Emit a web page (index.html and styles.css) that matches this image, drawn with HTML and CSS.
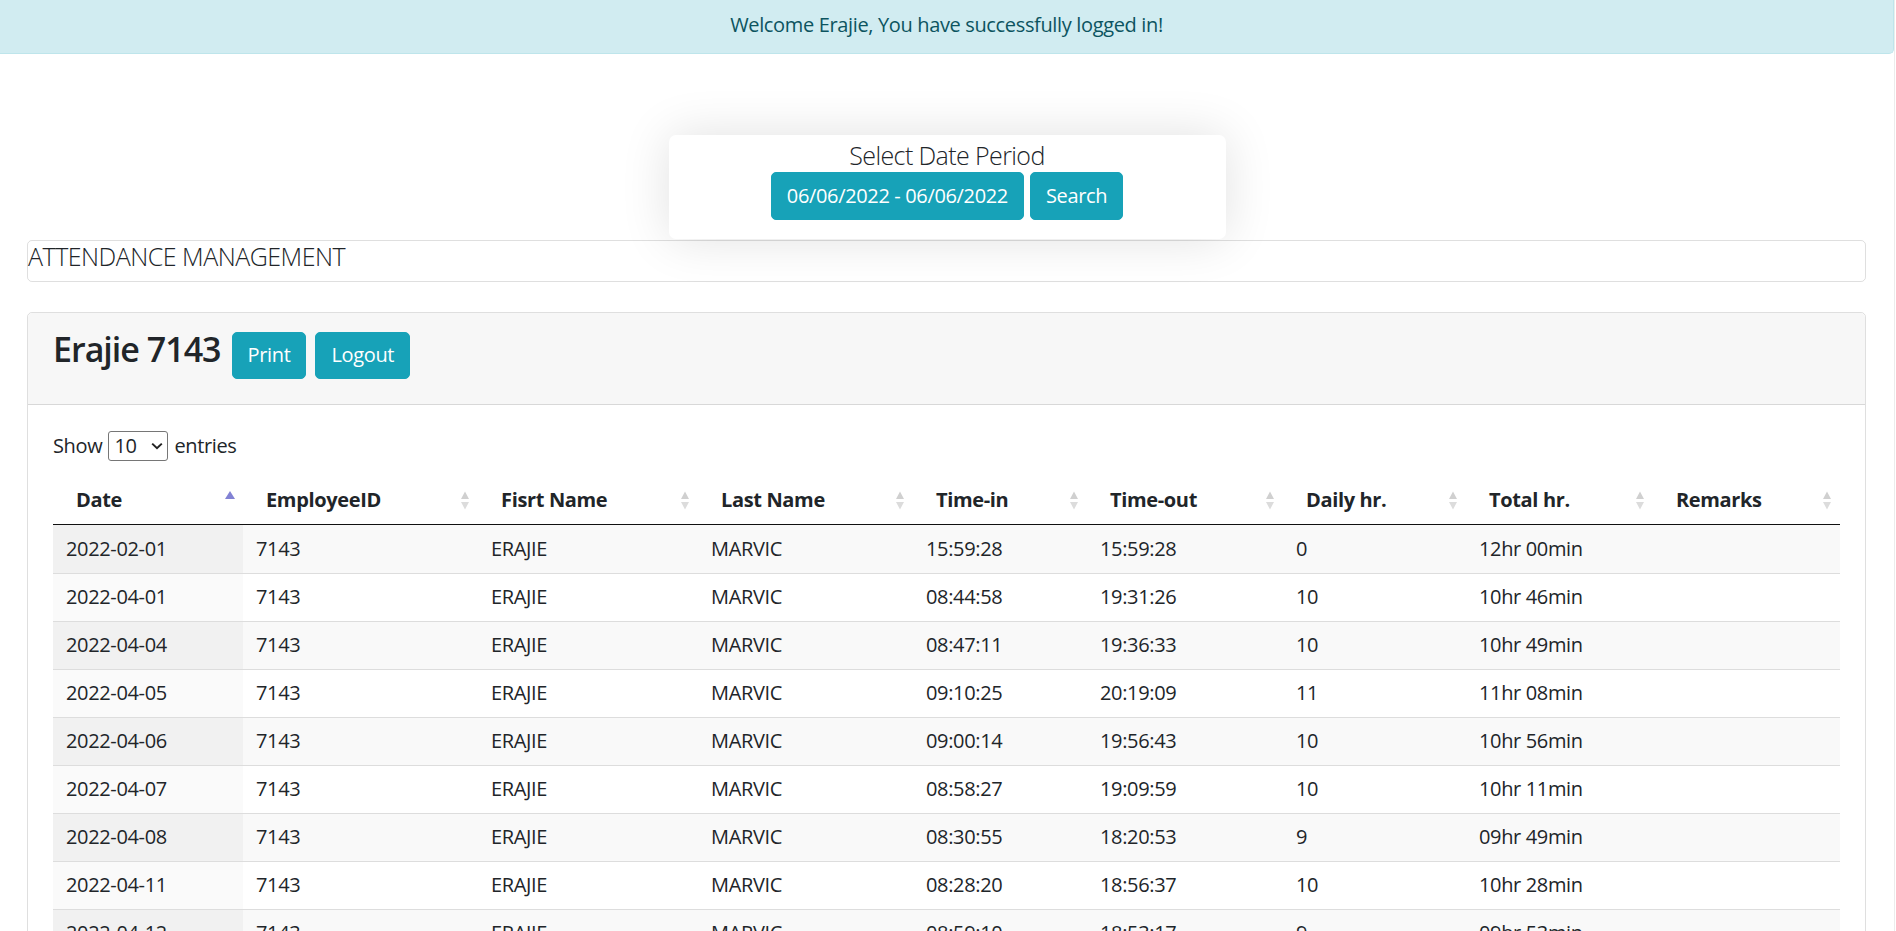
FILE: index.html
```html
<!DOCTYPE html>
<html lang="en">
<head>
<meta charset="utf-8">
<title>Attendance Management</title>
<link rel="stylesheet" href="styles.css">
</head>
<body>
<div class="page">
  <div class="alert">Welcome Erajie, You have successfully logged in!</div>

  <div class="period-wrap">
    <div class="period-card">
      <div class="period-title">Select Date Period</div>
      <div class="period-actions">
        <button class="btn btn-tall">06/06/2022 - 06/06/2022</button>
        <button class="btn btn-tall">Search</button>
      </div>
    </div>
  </div>

  <div class="content">
    <div class="title-box"><h5 class="title">ATTENDANCE MANAGEMENT</h5></div>

    <div class="card">
      <div class="card-header">
        <h3 class="user">Erajie 7143</h3>
        <button class="btn btn-print">Print</button>
        <button class="btn">Logout</button>
      </div>
      <div class="card-body">
        <div class="length">
          <span>Show</span>
          <span class="select"><span>10</span><svg width="12" height="8" viewBox="0 0 12 8"><polyline points="1.2,1.6 6,6.2 10.8,1.6" fill="none" stroke="#222" stroke-width="2"/></svg></span>
          <span>entries</span>
        </div>

        <table class="grid">
          <colgroup>
            <col style="width:190px"><col style="width:235px"><col style="width:220px"><col style="width:215px"><col style="width:174px"><col style="width:196px"><col style="width:183px"><col style="width:187px"><col style="width:187px">
          </colgroup>
          <thead>
            <tr>
              <th><div class="th-in"><span>Date</span><svg class="sort" width="10" height="19" viewBox="0 0 10 19"><path d="M0 8 L5 0 L10 8Z" fill="#8282d4"/></svg></div></th>
              <th><div class="th-in"><span>EmployeeID</span><svg class="sort" width="10" height="19" viewBox="0 0 10 19"><path d="M1 8 L5 0.5 L9 8Z" fill="#d0d0d0"/><path d="M1 11 L5 18.5 L9 11Z" fill="#dcdcdc"/></svg></div></th>
              <th><div class="th-in"><span>Fisrt Name</span><svg class="sort" width="10" height="19" viewBox="0 0 10 19"><path d="M1 8 L5 0.5 L9 8Z" fill="#d0d0d0"/><path d="M1 11 L5 18.5 L9 11Z" fill="#dcdcdc"/></svg></div></th>
              <th><div class="th-in"><span>Last Name</span><svg class="sort" width="10" height="19" viewBox="0 0 10 19"><path d="M1 8 L5 0.5 L9 8Z" fill="#d0d0d0"/><path d="M1 11 L5 18.5 L9 11Z" fill="#dcdcdc"/></svg></div></th>
              <th><div class="th-in"><span>Time-in</span><svg class="sort" width="10" height="19" viewBox="0 0 10 19"><path d="M1 8 L5 0.5 L9 8Z" fill="#d0d0d0"/><path d="M1 11 L5 18.5 L9 11Z" fill="#dcdcdc"/></svg></div></th>
              <th><div class="th-in"><span>Time-out</span><svg class="sort" width="10" height="19" viewBox="0 0 10 19"><path d="M1 8 L5 0.5 L9 8Z" fill="#d0d0d0"/><path d="M1 11 L5 18.5 L9 11Z" fill="#dcdcdc"/></svg></div></th>
              <th><div class="th-in"><span>Daily hr.</span><svg class="sort" width="10" height="19" viewBox="0 0 10 19"><path d="M1 8 L5 0.5 L9 8Z" fill="#d0d0d0"/><path d="M1 11 L5 18.5 L9 11Z" fill="#dcdcdc"/></svg></div></th>
              <th><div class="th-in"><span>Total hr.</span><svg class="sort" width="10" height="19" viewBox="0 0 10 19"><path d="M1 8 L5 0.5 L9 8Z" fill="#d0d0d0"/><path d="M1 11 L5 18.5 L9 11Z" fill="#dcdcdc"/></svg></div></th>
              <th><div class="th-in"><span>Remarks</span><svg class="sort" width="10" height="19" viewBox="0 0 10 19"><path d="M1 8 L5 0.5 L9 8Z" fill="#d0d0d0"/><path d="M1 11 L5 18.5 L9 11Z" fill="#dcdcdc"/></svg></div></th>
            </tr>
          </thead>
          <tbody>
            <tr><td class="sorted">2022-02-01</td><td>7143</td><td>ERAJIE</td><td>MARVIC</td><td>15:59:28</td><td>15:59:28</td><td>0</td><td>12hr 00min</td><td></td></tr>
            <tr><td class="sorted">2022-04-01</td><td>7143</td><td>ERAJIE</td><td>MARVIC</td><td>08:44:58</td><td>19:31:26</td><td>10</td><td>10hr 46min</td><td></td></tr>
            <tr><td class="sorted">2022-04-04</td><td>7143</td><td>ERAJIE</td><td>MARVIC</td><td>08:47:11</td><td>19:36:33</td><td>10</td><td>10hr 49min</td><td></td></tr>
            <tr><td class="sorted">2022-04-05</td><td>7143</td><td>ERAJIE</td><td>MARVIC</td><td>09:10:25</td><td>20:19:09</td><td>11</td><td>11hr 08min</td><td></td></tr>
            <tr><td class="sorted">2022-04-06</td><td>7143</td><td>ERAJIE</td><td>MARVIC</td><td>09:00:14</td><td>19:56:43</td><td>10</td><td>10hr 56min</td><td></td></tr>
            <tr><td class="sorted">2022-04-07</td><td>7143</td><td>ERAJIE</td><td>MARVIC</td><td>08:58:27</td><td>19:09:59</td><td>10</td><td>10hr 11min</td><td></td></tr>
            <tr><td class="sorted">2022-04-08</td><td>7143</td><td>ERAJIE</td><td>MARVIC</td><td>08:30:55</td><td>18:20:53</td><td>9</td><td>09hr 49min</td><td></td></tr>
            <tr><td class="sorted">2022-04-11</td><td>7143</td><td>ERAJIE</td><td>MARVIC</td><td>08:28:20</td><td>18:56:37</td><td>10</td><td>10hr 28min</td><td></td></tr>
            <tr><td class="sorted">2022-04-12</td><td>7143</td><td>ERAJIE</td><td>MARVIC</td><td>08:59:10</td><td>18:53:17</td><td>9</td><td>09hr 53min</td><td></td></tr>
            <tr><td class="sorted">2022-04-13</td><td>7143</td><td>ERAJIE</td><td>MARVIC</td><td>08:41:36</td><td>19:02:44</td><td>10</td><td>10hr 21min</td><td></td></tr>
          </tbody>
        </table>
      </div>
    </div>
  </div>
</div>
</body>
</html>
```

FILE: styles.css
```css
* { box-sizing: border-box; }

html, body {
  margin: 0;
  padding: 0;
  background: #fff;
}

body {
  font-family: "Open Sans", "Noto Sans", "Liberation Sans", sans-serif;
  font-size: 20px;
  line-height: 30px;
  letter-spacing: -0.35px;
  color: #212529;
}

.page {
  margin-right: 1px;
  border-right: 1px solid #ececec;
  min-height: 931px;
}

.alert {
  height: 54px;
  padding-top: 10px;
  text-align: center;
  background: #d1ecf1;
  color: #0c5460;
  border-bottom: 1px solid #bee5eb;
  border-right: 1px solid #bee5eb;
  border-bottom-right-radius: 5px;
}

.period-wrap {
  display: flex;
  justify-content: center;
  margin-top: 81px;
  position: relative;
  z-index: 1;
}

.period-card {
  width: 557px;
  height: 104px;
  padding-top: 5px;
  background: #fff;
  border-radius: 7px;
  box-shadow: 0 0 50px rgba(0, 0, 0, 0.12);
  text-align: center;
}

.period-title {
  font-size: 25px;
  font-weight: 300;
  line-height: 30px;
  letter-spacing: -0.6px;
}

.period-actions {
  display: flex;
  justify-content: center;
  gap: 6px;
  margin-top: 2px;
}

.btn {
  font-family: inherit;
  font-size: 20px;
  line-height: 30px;
  letter-spacing: -0.35px;
  color: #fff;
  background: #17a2b8;
  border: 1px solid #17a2b8;
  border-radius: 5px;
  padding: 7.5px 15px;
  margin: 0;
  cursor: pointer;
}

.btn-tall {
  padding: 8px 15px;
}

.content {
  margin-top: 1px;
  padding: 0 28px 0 27px;
}

.title-box {
  border: 1px solid rgba(0, 0, 0, 0.125);
  border-radius: 5px;
}

.title {
  margin: 0 0 10px;
  font-size: 25px;
  font-weight: 300;
  line-height: 30px;
  letter-spacing: -0.5px;
}

.card {
  margin-top: 30px;
  border: 1px solid rgba(0, 0, 0, 0.125);
  border-radius: 5px;
}

.card-header {
  display: flex;
  align-items: baseline;
  padding: 15px 25px 25px;
  background: #f7f7f7;
  border-bottom: 1px solid rgba(0, 0, 0, 0.125);
  border-radius: 5px 5px 0 0;
}

.user {
  margin: 0 11px 0 0;
  font-size: 34px;
  font-weight: 600;
  line-height: 42px;
  letter-spacing: -1px;
}

.btn-print {
  margin-right: 9px;
}

.card-body {
  padding: 26px 25px 25px;
}

.length {
  display: flex;
  align-items: center;
  gap: 6px;
  height: 30px;
}

.select {
  width: 60px;
  height: 30px;
  display: flex;
  align-items: center;
  justify-content: space-between;
  padding: 0 4px 0 5px;
  border: 1px solid #767676;
  border-radius: 3px;
  background: #fff;
}

.grid {
  width: 100%;
  margin-top: 15px;
  border-collapse: separate;
  border-spacing: 0;
  table-layout: fixed;
}

.grid th {
  text-align: left;
  font-weight: 700;
  padding: 9px 8px 9px 23px;
  border-bottom: 1px solid #111;
  line-height: 30px;
}

.th-in {
  display: flex;
  align-items: center;
  justify-content: space-between;
}

.sort {
  flex: none;
  margin-top: 1px;
}

.grid td {
  padding: 8px 13px 9px;
  border-top: 1px solid #ddd;
  line-height: 30px;
  white-space: nowrap;
}

.grid tbody tr:first-child td {
  border-top: none;
  padding-top: 9px;
}

.grid tbody tr:nth-child(odd) td {
  background: #f9f9f9;
}

.grid tbody tr:nth-child(odd) td.sorted {
  background: #f1f1f1;
}

.grid tbody tr:nth-child(even) td.sorted {
  background: #fafafa;
}
```
